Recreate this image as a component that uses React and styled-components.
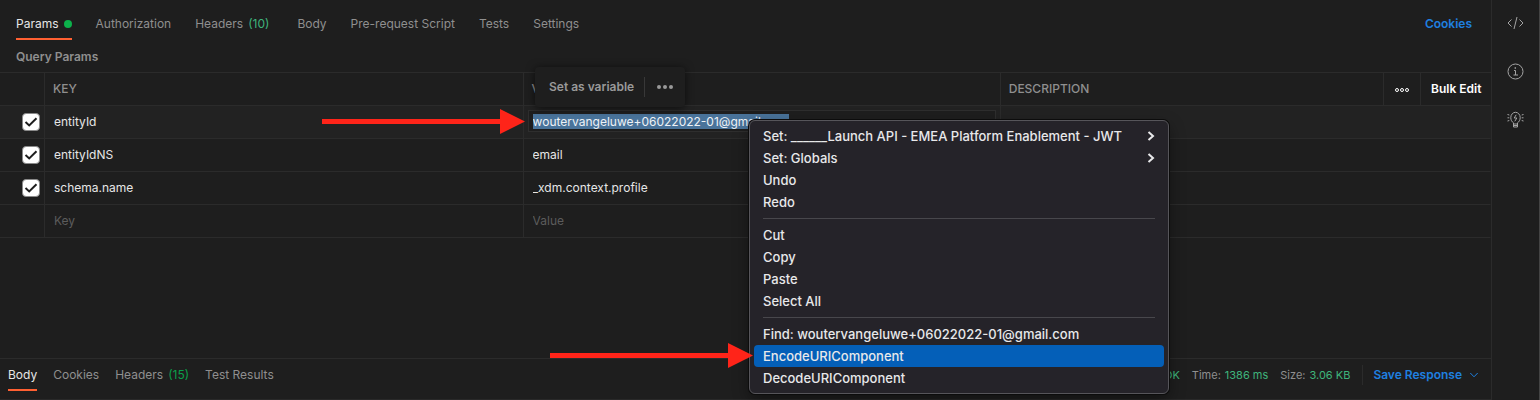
import React, { useEffect, useRef } from "react";
import styled, { createGlobalStyle, css } from "styled-components";

const c = {
  bg: "#1e1e1e",
  row: "#222222",
  line: "#2b2b2b",
  muted: "#8f8f8f",
  text: "#e6e6e6",
  green: "#3fb57c",
  blue: "#1f80e0",
  orange: "#ff6032",
};

const Global = createGlobalStyle`
  * { box-sizing: border-box; }
  body {
    margin: 0;
    background: ${c.bg};
    color: ${c.muted};
    font: 400 12px/16px Inter, "Liberation Sans", sans-serif;
  }
  button, input { font: inherit; color: inherit; }
  button { background: none; border: 0; padding: 0; cursor: pointer; }
`;

const Page = styled.div`
  position: relative;
  display: flex;
  min-height: 100vh;
  overflow: hidden;
`;

const Main = styled.main`
  flex: 1;
  min-width: 0;
  display: flex;
  flex-direction: column;
`;

const Rail = styled.aside`
  width: 49px;
  border-left: 1px solid ${c.line};
  border-right: 1px solid #444;
  display: flex;
  flex-direction: column;
  align-items: center;
  gap: 28px;
  padding-top: 13px;
`;

const IconButton = styled.button`
  display: flex;
  width: 19px;
  height: 20px;
  align-items: center;
  justify-content: center;
  color: #a4a4a4;
`;

const TabBar = styled.div`
  display: flex;
  justify-content: space-between;
  padding: 0 19px 0 16px;
`;

const Tabs = styled.nav`
  display: flex;
  gap: 24px;
`;

const Tab = styled.button`
  display: flex;
  align-items: center;
  gap: 5px;
  height: 40px;
  padding-top: 14px;
  padding-bottom: 4px;
  border-bottom: 2px solid ${(p) => (p.$active ? c.orange : "transparent")};
  color: ${(p) => (p.$active ? c.text : c.muted)};
  white-space: nowrap;
`;

const Dot = styled.span`
  width: 8px;
  height: 8px;
  border-radius: 50%;
  background: #0cb14b;
`;

const Count = styled.span`
  color: ${(p) => (p.$strong ? "#0ba04a" : c.green)};
`;

const TabCount = styled(Count)`
  margin-right: ${(p) => (p.$strong ? 0 : 4)}px;
`;

const CookiesLink = styled.a`
  padding-top: 16px;
  color: ${c.blue};
  font-weight: 600;
  text-decoration: none;
`;

const Heading = styled.h2`
  margin: 0;
  padding: 9px 16px 7px;
  font-size: 12px;
  line-height: 16px;
  font-weight: 600;
`;

const Table = styled.table`
  width: 100%;
  table-layout: fixed;
  border-collapse: separate;
  border-spacing: 0;
  border-top: 1px solid ${c.line};
`;

const Col = styled.col`
  width: ${(p) => p.$w || "auto"};
`;

const cell = css`
  height: 33px;
  border-bottom: 1px solid ${c.line};
  border-right: 1px solid ${(p) => (p.$open ? "transparent" : c.line)};
`;

const Th = styled.th`
  ${cell}
  padding: 0 0 0 ${(p) => (p.$center ? 0 : p.$open ? 10 : 8)}px;
  text-align: ${(p) => (p.$center ? "center" : "left")};
  font-weight: 500;
`;

const Td = styled.td`
  ${cell}
  padding: 0 4px;
`;

const FieldCell = styled(Td)`
  padding-top: 4px;
  vertical-align: top;
`;

const Tr = styled.tr`
  background: ${(p) => (p.$hover ? c.row : "transparent")};
`;

const Check = styled.label`
  display: grid;
  justify-content: end;
  > * { grid-area: 1 / 1; }
`;

const CheckInput = styled.input`
  appearance: none;
  width: 18px;
  height: 18px;
  margin: 0;
  background: #fff;
  border: 1px solid #8a8a8a;
  border-radius: 4px;
`;

const CheckMark = styled.svg`
  width: 18px;
  height: 18px;
  pointer-events: none;
`;

const Field = styled.input`
  display: block;
  width: 100%;
  height: 22px;
  padding: 0 4px;
  border: 1px solid ${(p) => (p.$editing ? "#2e2e2e" : "transparent")};
  background: ${(p) => (p.$editing ? c.bg : "transparent")};
  color: ${c.text};
  outline: none;
  &::placeholder { color: #5c5c5c; opacity: 1; }
  &::selection { background: rgba(74, 116, 156, 0.99); color: #eef2f6; }
`;

const HeadButton = styled.button`
  display: inline-flex;
  color: #fff;
  font-weight: 600;
  white-space: nowrap;
  vertical-align: middle;
`;

const Spacer = styled.div`
  flex: 1;
`;

const ResponseBar = styled.footer`
  display: flex;
  justify-content: space-between;
  height: 42px;
  padding: 0 13px 0 8px;
  border-top: 1px solid ${c.line};
  border-bottom: 1px solid #292929;
`;

const ResponseTabs = styled(Tabs)`
  gap: 16px;
  ${Tab} {
    height: 32px;
    padding-top: 4px;
    padding-bottom: 2px;
  }
`;

const Meta = styled.div`
  display: flex;
  align-items: center;
  gap: 12px;
  height: 32px;
  font-size: 11px;
`;

const MetaItem = styled.span`
  display: flex;
  gap: 4px;
`;

const SaveButton = styled.button`
  display: flex;
  align-items: center;
  gap: 8px;
  height: 20px;
  padding-left: 10px;
  border-left: 1px solid ${c.line};
  color: ${c.blue};
  font-size: 12px;
  font-weight: 600;
`;

const Popup = styled.div`
  position: absolute;
  left: 535px;
  top: 67px;
  height: 40px;
  display: flex;
  align-items: center;
  gap: 10px;
  padding: 0 12px 0 14px;
  border-radius: 4px;
  background: ${c.bg};
  box-shadow: 0 1px 8px rgba(0, 0, 0, 0.6);
  font-weight: 600;
  color: #999;
`;

const PopupDivider = styled.span`
  width: 1px;
  height: 20px;
  background: #383838;
`;

const Menu = styled.div`
  position: absolute;
  left: 749px;
  top: 120px;
  width: 420px;
  padding: 4px;
  border: 1px solid #56555a;
  border-radius: 6px;
  background: #252329;
  box-shadow: 0 0 0 1px #0c0c0c, 0 6px 16px rgba(0, 0, 0, 0.4);
`;

const MenuItem = styled.button`
  display: flex;
  align-items: center;
  justify-content: space-between;
  width: 100%;
  height: 22px;
  padding: 0 9px;
  border-radius: 4px;
  background: ${(p) => (p.$active ? "#045fb8" : "transparent")};
  color: #e8e8ea;
  font-size: 13px;
  font-weight: 500;
  white-space: nowrap;
`;

const Separator = styled.hr`
  height: 1px;
  margin: 5px 9px;
  border: 0;
  background: #48474c;
`;

const ArrowSvg = styled.svg`
  position: absolute;
  left: ${(p) => p.$x}px;
  top: ${(p) => p.$y}px;
  pointer-events: none;
`;

const Arrow = ({ x, y }) => (
  <ArrowSvg $x={x} $y={y} width="203" height="26" viewBox="0 0 203 26" aria-hidden="true">
    <path d="M0 10H178V0L203 12.5L178 25V15H0Z" fill="#ff2419" />
  </ArrowSvg>
);

const requestTabs = [
  { label: "Params", active: true, dot: true },
  { label: "Authorization" },
  { label: "Headers", count: "(10)" },
  { label: "Body" },
  { label: "Pre-request Script" },
  { label: "Tests" },
  { label: "Settings" },
];

const responseTabs = [
  { label: "Body", active: true },
  { label: "Cookies" },
  { label: "Headers", count: "(15)" },
  { label: "Test Results" },
];

const rows = [
  { key: "entityId", value: "woutervangeluwe+06022022-01@gmail.com", editing: true },
  { key: "entityIdNS", value: "email" },
  { key: "schema.name", value: "_xdm.context.profile" },
];

const menu = [
  [
    { label: "Set: ______Launch API - EMEA Platform Enablement - JWT", sub: true },
    { label: "Set: Globals", sub: true },
    { label: "Undo" },
    { label: "Redo" },
  ],
  [{ label: "Cut" }, { label: "Copy" }, { label: "Paste" }, { label: "Select All" }],
  [
    { label: "Find: woutervangeluwe+06022022-01@gmail.com" },
    { label: "EncodeURIComponent", active: true },
    { label: "DecodeURIComponent" },
  ],
];

const TabList = ({ items, strong }) =>
  items.map((t) => (
    <Tab key={t.label} $active={t.active}>
      {t.label}
      {t.dot && <Dot />}
      {t.count && <TabCount $strong={strong}>{t.count}</TabCount>}
    </Tab>
  ));

export default function App() {
  const editing = useRef(null);
  useEffect(() => {
    editing.current.focus();
    editing.current.select();
  }, []);

  return (
    <Page>
      <Global />
      <Main>
        <TabBar>
          <Tabs>
            <TabList items={requestTabs} />
          </Tabs>
          <CookiesLink href="#cookies">Cookies</CookiesLink>
        </TabBar>
        <Heading>Query Params</Heading>
        <Table>
          <colgroup>
            <Col $w="45px" />
            <Col $w="32.1%" />
            <Col $w="32%" />
            <Col />
            <Col $w="37px" />
            <Col $w="70px" />
          </colgroup>
          <thead>
            <tr>
              <Th />
              <Th>KEY</Th>
              <Th>VALUE</Th>
              <Th>DESCRIPTION</Th>
              <Th $center>
                <HeadButton aria-label="Columns">
                  <svg width="16" height="6" viewBox="0 0 16 6" fill="none" stroke="currentColor">
                    <circle cx="3" cy="3" r="1.5" />
                    <circle cx="8" cy="3" r="1.5" />
                    <circle cx="13" cy="3" r="1.5" />
                  </svg>
                </HeadButton>
              </Th>
              <Th $open>
                <HeadButton>Bulk Edit</HeadButton>
              </Th>
            </tr>
          </thead>
          <tbody>
            {rows.map((r) => (
              <Tr key={r.key} $hover={r.editing}>
                <Td>
                  <Check>
                    <CheckInput type="checkbox" defaultChecked aria-label={r.key} />
                    <CheckMark viewBox="0 0 18 18" fill="none" stroke="#1e1e1e" strokeWidth="2">
                      <path d="M3.5 9L7.2 12.4L14.5 5.2" />
                    </CheckMark>
                  </Check>
                </Td>
                <FieldCell>
                  <Field defaultValue={r.key} aria-label="Key" />
                </FieldCell>
                <FieldCell>
                  <Field
                    ref={r.editing ? editing : null}
                    $editing={r.editing}
                    defaultValue={r.value}
                    aria-label="Value"
                    spellCheck={false}
                  />
                </FieldCell>
                <Td colSpan={3} $open />
              </Tr>
            ))}
            <Tr>
              <Td />
              <FieldCell>
                <Field placeholder="Key" aria-label="New key" />
              </FieldCell>
              <FieldCell>
                <Field placeholder="Value" aria-label="New value" />
              </FieldCell>
              <Td colSpan={3} $open />
            </Tr>
          </tbody>
        </Table>
        <Spacer />
        <ResponseBar>
          <ResponseTabs>
            <TabList items={responseTabs} strong />
          </ResponseTabs>
          <Meta>
            <MetaItem>
              Status: <Count>200 OK</Count>
            </MetaItem>
            <MetaItem>
              Time: <Count>1386 ms</Count>
            </MetaItem>
            <MetaItem>
              Size: <Count>3.06 KB</Count>
            </MetaItem>
            <SaveButton>
              Save Response
              <svg width="8" height="6" viewBox="0 0 8 6" fill="none" stroke="currentColor">
                <path d="M0.3 1L4 4.8L7.7 1" />
              </svg>
            </SaveButton>
          </Meta>
        </ResponseBar>
      </Main>

      <Rail>
        <IconButton aria-label="Code">
          <svg width="17" height="14" viewBox="0 0 17 14" fill="none" stroke="currentColor">
            <path d="M4.5 3.5L1 7L4.5 10.5M12.500 3.5L16 7L12.500 10.5M10 1L7 13" />
          </svg>
        </IconButton>
        <IconButton aria-label="Info">
          <svg width="17" height="17" viewBox="0 0 17 17" fill="none" stroke="currentColor">
            <circle cx="8.5" cy="8.5" r="7.500" />
            <path d="M7 7.500H8.500V12M6.500 12H11" />
            <path d="M7.600 5H9" strokeWidth="1.400" />
          </svg>
        </IconButton>
        <IconButton aria-label="Tips">
          <svg width="17" height="17" viewBox="0 0 17 17" fill="none" stroke="currentColor">
            <path d="M6.500 13V11.800C4.800 10.800 3.800 9 3.800 6.500A4.700 5.200 0 0 1 13.200 6.500C13.200 9 12.200 10.800 10.500 11.800V13ZM6.500 13V16H10.500V13M6.500 14.500H10.500" />
            <path d="M9.200 3.800L7.200 7H9.800L7.800 10.300" />
            <path d="M0.500 3.500L2.300 4M0.500 6.800H2.300M0.500 10L2.300 9.500M16.500 3.500L14.700 4M16.500 6.800H14.700M16.500 10L14.700 9.500" />
          </svg>
        </IconButton>
      </Rail>

      <Popup>
        <button>Set as variable</button>
        <PopupDivider />
        <button aria-label="More actions">
          <svg width="18" height="6" viewBox="0 0 18 6" fill="currentColor" display="block">
            <circle cx="4" cy="3" r="2" />
            <circle cx="10" cy="3" r="2" />
            <circle cx="16" cy="3" r="2" />
          </svg>
        </button>
      </Popup>

      <Menu role="menu">
        {menu.map((group, i) => (
          <React.Fragment key={i}>
            {i > 0 && <Separator />}
            {group.map((m) => (
              <MenuItem key={m.label} role="menuitem" $active={m.active}>
                {m.label}
                {m.sub && (
                  <svg width="8" height="10" viewBox="0 0 8 10" fill="none" stroke="currentColor" strokeWidth="2">
                    <path d="M1.500 1L6 5L1.500 9" />
                  </svg>
                )}
              </MenuItem>
            ))}
          </React.Fragment>
        ))}
      </Menu>

      <Arrow x={322} y={109} />
      <Arrow x={550} y={343} />
    </Page>
  );
}
